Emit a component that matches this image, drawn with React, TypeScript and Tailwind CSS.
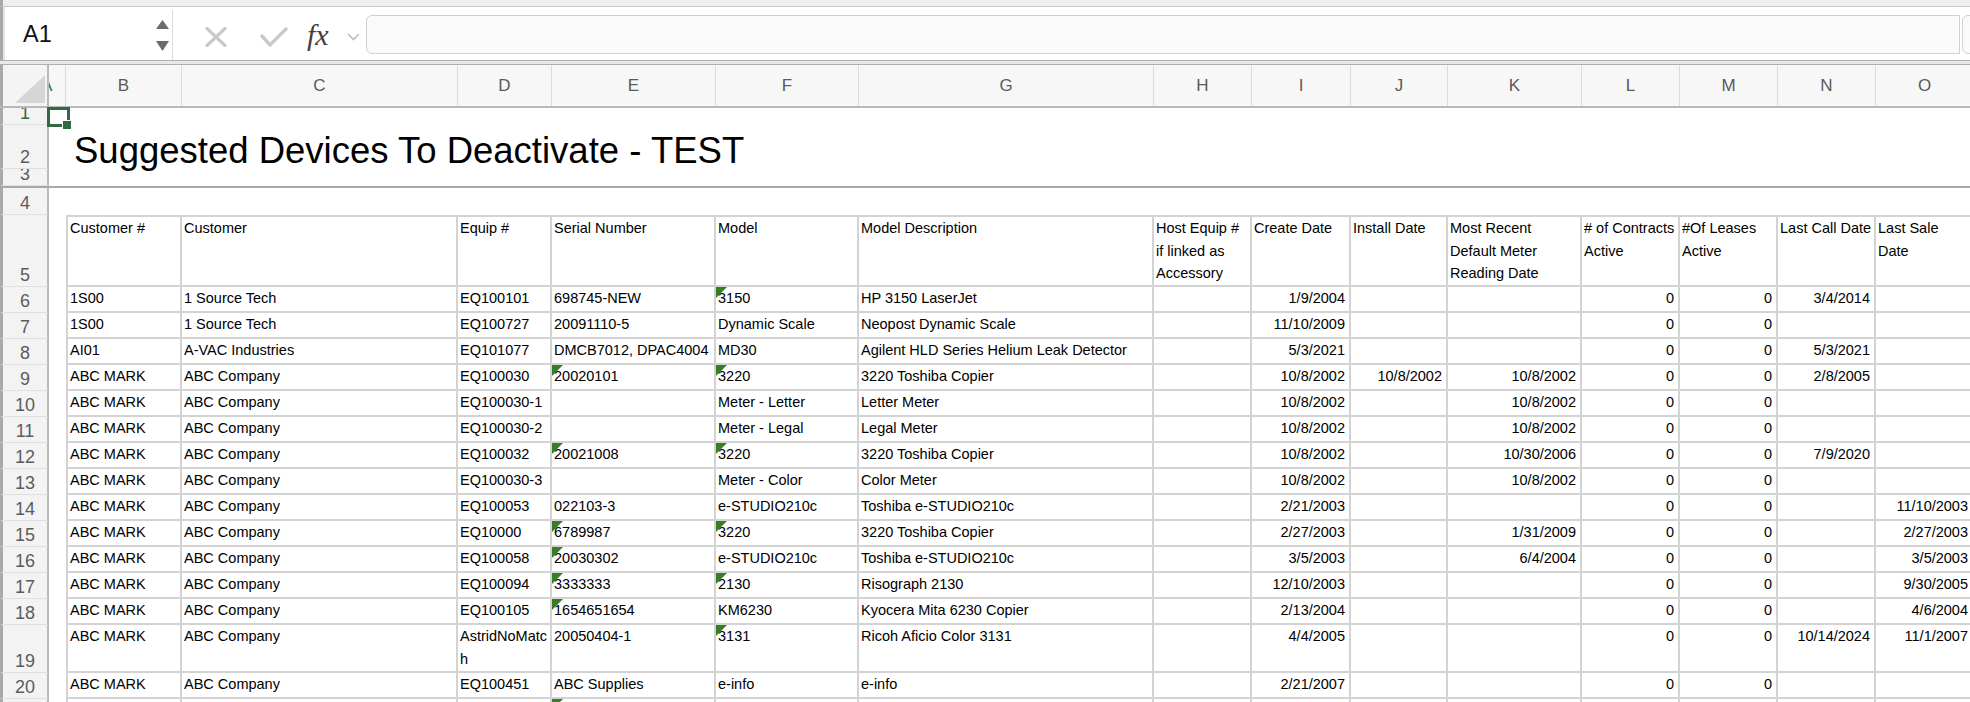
import React from 'react'

type Col = { label: string; w: string; right?: boolean }

const cols: Col[] = [
  { label: 'B', w: 'w-[116px]' },
  { label: 'C', w: 'w-[276px]' },
  { label: 'D', w: 'w-[94px]' },
  { label: 'E', w: 'w-[164px]' },
  { label: 'F', w: 'w-[143px]' },
  { label: 'G', w: 'w-[295px]' },
  { label: 'H', w: 'w-[98px]' },
  { label: 'I', w: 'w-[99px]', right: true },
  { label: 'J', w: 'w-[97px]', right: true },
  { label: 'K', w: 'w-[134px]', right: true },
  { label: 'L', w: 'w-[98px]', right: true },
  { label: 'M', w: 'w-[98px]', right: true },
  { label: 'N', w: 'w-[98px]', right: true },
  { label: 'O', w: 'w-[98px]', right: true },
]

const headers = [
  'Customer #',
  'Customer',
  'Equip #',
  'Serial Number',
  'Model',
  'Model Description',
  'Host Equip #\nif linked as\nAccessory',
  'Create Date',
  'Install Date',
  'Most Recent\nDefault Meter\nReading Date',
  '# of Contracts\nActive',
  '#Of Leases\nActive',
  'Last Call Date',
  'Last Sale\nDate',
]

type Row = { n: number; h: string; c: string[]; f?: number[] }

const abc = ['ABC MARK', 'ABC Company']

const rows: Row[] = [
  { n: 6, h: 'h-[26px]', c: ['1S00', '1 Source Tech', 'EQ100101', '698745-NEW', '3150', 'HP 3150 LaserJet', '', '1/9/2004', '', '', '0', '0', '3/4/2014', ''], f: [4] },
  { n: 7, h: 'h-[26px]', c: ['1S00', '1 Source Tech', 'EQ100727', '20091110-5', 'Dynamic Scale', 'Neopost Dynamic Scale', '', '11/10/2009', '', '', '0', '0', '', ''] },
  { n: 8, h: 'h-[26px]', c: ['AI01', 'A-VAC Industries', 'EQ101077', 'DMCB7012, DPAC4004', 'MD30', 'Agilent HLD Series Helium Leak Detector', '', '5/3/2021', '', '', '0', '0', '5/3/2021', ''] },
  { n: 9, h: 'h-[26px]', c: [...abc, 'EQ100030', '20020101', '3220', '3220 Toshiba Copier', '', '10/8/2002', '10/8/2002', '10/8/2002', '0', '0', '2/8/2005', ''], f: [3, 4] },
  { n: 10, h: 'h-[26px]', c: [...abc, 'EQ100030-1', '', 'Meter - Letter', 'Letter Meter', '', '10/8/2002', '', '10/8/2002', '0', '0', '', ''] },
  { n: 11, h: 'h-[26px]', c: [...abc, 'EQ100030-2', '', 'Meter - Legal', 'Legal Meter', '', '10/8/2002', '', '10/8/2002', '0', '0', '', ''] },
  { n: 12, h: 'h-[26px]', c: [...abc, 'EQ100032', '20021008', '3220', '3220 Toshiba Copier', '', '10/8/2002', '', '10/30/2006', '0', '0', '7/9/2020', ''], f: [3, 4] },
  { n: 13, h: 'h-[26px]', c: [...abc, 'EQ100030-3', '', 'Meter - Color', 'Color Meter', '', '10/8/2002', '', '10/8/2002', '0', '0', '', ''] },
  { n: 14, h: 'h-[26px]', c: [...abc, 'EQ100053', '022103-3', 'e-STUDIO210c', 'Toshiba e-STUDIO210c', '', '2/21/2003', '', '', '0', '0', '', '11/10/2003'] },
  { n: 15, h: 'h-[26px]', c: [...abc, 'EQ10000', '6789987', '3220', '3220 Toshiba Copier', '', '2/27/2003', '', '1/31/2009', '0', '0', '', '2/27/2003'], f: [3, 4] },
  { n: 16, h: 'h-[26px]', c: [...abc, 'EQ100058', '20030302', 'e-STUDIO210c', 'Toshiba e-STUDIO210c', '', '3/5/2003', '', '6/4/2004', '0', '0', '', '3/5/2003'], f: [3] },
  { n: 17, h: 'h-[26px]', c: [...abc, 'EQ100094', '3333333', '2130', 'Risograph 2130', '', '12/10/2003', '', '', '0', '0', '', '9/30/2005'], f: [3, 4] },
  { n: 18, h: 'h-[26px]', c: [...abc, 'EQ100105', '1654651654', 'KM6230', 'Kyocera Mita 6230 Copier', '', '2/13/2004', '', '', '0', '0', '', '4/6/2004'], f: [3] },
  { n: 19, h: 'h-[48px]', c: [...abc, 'AstridNoMatc\nh', '20050404-1', '3131', 'Ricoh Aficio Color 3131', '', '4/4/2005', '', '', '0', '0', '10/14/2024', '11/1/2007'], f: [4] },
  { n: 20, h: 'h-[26px]', c: [...abc, 'EQ100451', 'ABC Supplies', 'e-info', 'e-info', '', '2/21/2007', '', '', '0', '0', '', ''] },
  { n: 21, h: 'h-[26px]', c: ['', '', '', '', '', '', '', '', '', '', '', '', '', ''], f: [3] },
]

function Flag() {
  return (
    <svg className="absolute top-0 left-0" width="11" height="11" viewBox="0 0 11 11">
      <polygon points="0,0 11,0 0,11" fill="#3a7d24" />
    </svg>
  )
}

function RowHead({ n, green }: { n: number; green?: boolean }) {
  return (
    <div
      className={`w-[49px] shrink-0 bg-[#f3f3f3] border-l-[3px] border-l-[#a9a9a9] border-r-2 border-r-[#b9b9b9] border-b border-b-[#dfdfdf] flex items-end justify-center overflow-hidden text-[18px] leading-[20px] pb-[1px] ${
        green ? 'text-[#2f6a45]' : 'text-[#5c5c5c]'
      }`}
    >
      {n}
    </div>
  )
}

function TableRow({ n, h, c, f = [], header }: Row & { header?: boolean }) {
  return (
    <div className={`flex ${h}`}>
      <RowHead n={n} />
      <div className="w-[17px] shrink-0" />
      {cols.map((col, i) => (
        <div
          key={col.label}
          className={`${col.w} shrink-0 relative overflow-hidden whitespace-pre border-r-2 border-b-2 border-[#d3d3d3] text-[14.5px] leading-[22.5px] ${
            i === 0 ? 'border-l-2' : ''
          } ${header ? 'border-t-2 pl-[2px]' : col.right ? 'text-right pr-[4px]' : 'pl-[2px]'}`}
        >
          {f.includes(i) && <Flag />}
          {c[i]}
        </div>
      ))}
    </div>
  )
}

function FormulaBar() {
  return (
    <>
      <div className="h-[7px] bg-[#efefef] border-b border-[#c8c8c8] border-l-[3px] border-l-[#a9a9a9]" />
      <div className="h-[53px] flex items-start bg-white">
        <div className="w-[5px] h-full bg-[#e4e4e4] border-l-[3px] border-[#a9a9a9] shrink-0" />
        <div className="w-[168px] h-[50px] mt-[3px] shrink-0 bg-white border-r border-[#dadada] flex items-center pl-[18px] pr-[3px]">
          <span className="flex-1 text-[23.5px] text-[#111]">A1</span>
          <div className="flex flex-col gap-[12px] mt-[1px]">
            <svg width="13" height="9" viewBox="0 0 13 9">
              <polygon points="0,9 6.5,0 13,9" fill="#6b6b6b" />
            </svg>
            <svg width="13" height="10" viewBox="0 0 13 10">
              <polygon points="0,0 13,0 6.5,10" fill="#6b6b6b" />
            </svg>
          </div>
        </div>
        <div className="flex items-center h-full pt-[7px] shrink-0">
          <svg className="ml-[32px]" width="22" height="20" viewBox="0 0 22 20">
            <path d="M2 1.5 L20 18.5 M20 1.5 L2 18.5" stroke="#c9c9c9" strokeWidth="3.2" strokeLinecap="round" />
          </svg>
          <svg className="ml-[33px]" width="28" height="20" viewBox="0 0 28 20">
            <path d="M2 9 L10 18 L26 2" stroke="#c9c9c9" strokeWidth="3.4" fill="none" strokeLinecap="round" strokeLinejoin="round" />
          </svg>
          <span className="ml-[19px] w-[28px] font-['Liberation_Serif',serif] italic text-[30px] leading-none text-[#3f3f3f] -mt-[4px]">
            fx
          </span>
          <svg className="ml-[12px]" width="13" height="8" viewBox="0 0 13 8">
            <path d="M1 1 L6.5 6.5 L12 1" stroke="#bdbdbd" strokeWidth="1.6" fill="none" />
          </svg>
        </div>
        <div className="ml-[6px] mt-[8px] h-[39px] w-[1594px] shrink-0 bg-[#fafafa] border border-[#d0d0d0] rounded-l-[6px]" />
        <div className="ml-[2px] mt-[8px] h-[39px] w-[20px] shrink-0 bg-[#fafafa] border border-[#d0d0d0] rounded-l-[6px]" />
      </div>
      <div className="h-[5px] border-y border-[#b0b0b0] bg-[#e9e9e9]" />
    </>
  )
}

function ColumnHeader() {
  return (
    <div className="h-[43px] flex bg-[#f7f7f7] border-b-2 border-[#b9b9b9]">
      <div className="w-[49px] shrink-0 relative bg-[#f4f4f4] border-l-[3px] border-l-[#a9a9a9] border-r-2 border-r-[#b9b9b9]">
        <svg className="absolute right-[2px] bottom-[3px]" width="30" height="28" viewBox="0 0 30 28">
          <polygon points="0,28 30,0 30,28" fill="#d6d6d6" />
        </svg>
      </div>
      <div className="w-[17px] shrink-0 overflow-hidden border-r border-[#dcdcdc] flex items-center">
        <span className="-ml-[8px] text-[17px] text-[#2f6a45]">A</span>
      </div>
      {cols.map((col) => (
        <div
          key={col.label}
          className={`${col.w} shrink-0 border-r border-[#dcdcdc] flex items-center justify-center text-[17px] text-[#5a5a5a]`}
        >
          {col.label}
        </div>
      ))}
    </div>
  )
}

export default function App() {
  return (
    <div className="w-[1970px] h-[702px] overflow-hidden bg-white text-black relative font-['Liberation_Sans',Arial,sans-serif]">
      <FormulaBar />
      <ColumnHeader />

      {/* Frozen title rows */}
      <div className="flex h-[17px]">
        <RowHead n={1} green />
      </div>
      <div className="flex h-[44px]">
        <RowHead n={2} />
        <div className="self-end pl-[25px] whitespace-nowrap text-[36.5px] leading-none">
          Suggested Devices To Deactivate - TEST
        </div>
      </div>
      <div className="flex h-[17px]">
        <RowHead n={3} />
      </div>
      <div className="h-[2px] bg-[#a8a8a8]" />
      <div className="flex h-[27px]">
        <RowHead n={4} />
      </div>

      {/* Table */}
      <TableRow n={5} h="h-[72px]" c={headers} header />
      {rows.map((r) => (
        <TableRow key={r.n} {...r} />
      ))}

      {/* A1 selection */}
      <div className="absolute left-[47px] top-[107px] w-[23px] h-[20px] border-[3px] border-[#2f6a45]" />
      <div className="absolute left-[62px] top-[120px] w-[10px] h-[10px] bg-[#2f6a45] border border-white" />
    </div>
  )
}
